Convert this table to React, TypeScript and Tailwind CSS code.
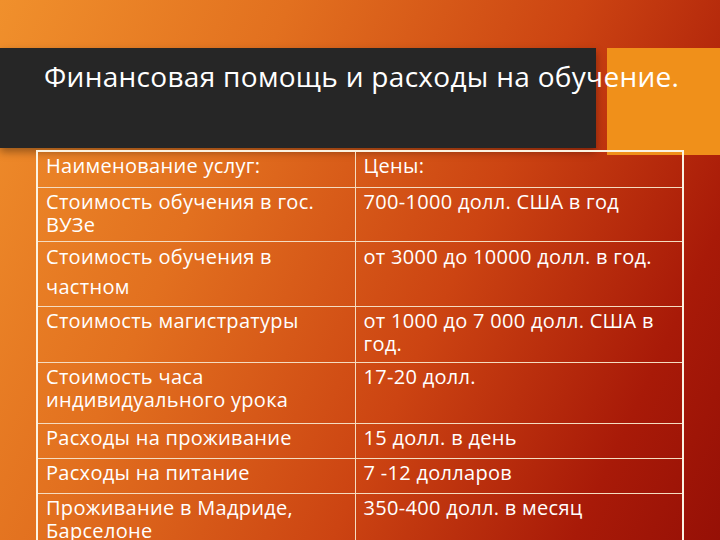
const rows: { name: string; price: string; h: string; wide?: boolean }[] = [
  { name: "Наименование услуг:", price: "Цены:", h: "h-[36px]" },
  { name: "Стоимость обучения в гос. ВУЗе", price: "700-1000 долл. США в год", h: "h-[54px]" },
  { name: "Стоимость обучения в частном", price: "от 3000 до 10000 долл. в год.", h: "h-[65px]", wide: true },
  { name: "Стоимость магистратуры", price: "от 1000 до 7 000 долл. США в год.", h: "h-[56px]" },
  { name: "Стоимость часа индивидуального урока", price: "17-20 долл.", h: "h-[61px]" },
  { name: "Расходы на проживание", price: "15 долл. в день", h: "h-[35px]" },
  { name: "Расходы на питание", price: "7 -12 долларов", h: "h-[35px]" },
  { name: "Проживание в Мадриде, Барселоне", price: "350-400 долл. в месяц", h: "h-[60px]" }
];

export default function App() {
  return (
    <div className="relative h-[540px] w-[720px] overflow-hidden bg-[linear-gradient(115deg,#f0902c_0%,#e2701f_30%,#cc4412_60%,#a81a08_85%,#961006_100%)] font-['Open_Sans','Noto_Sans',sans-serif] text-white">
      <div className="h-[48px]" />
      <div className="flex h-[107px]">
        <div className="h-[100px] w-[596px] bg-[#262626] shadow-[0_4px_8px_rgba(0,0,0,0.35)]" />
        <div className="ml-[11px] h-[107px] flex-1 bg-[#f0901a]" />
      </div>
      <h1 className="absolute left-[44px] top-[58px] whitespace-nowrap text-[28px] leading-[36px] tracking-[0.3px] text-white">
        Финансовая помощь и расходы на обучение.
      </h1>
      <table className="absolute left-[36px] top-[150px] w-[648px] table-fixed border-collapse border-2 border-[#fbf3e2] text-[20px] tracking-[0.3px]">
        <colgroup>
          <col className="w-[318px]" />
          <col />
        </colgroup>
        <tbody>
          {rows.map((r) => (
            <tr key={r.name} className={`${r.h} border-b border-[#f5dcc0]`}>
              <td className={`border-r border-[#f5dcc0] px-[8px] align-top ${r.wide ? "pt-0 leading-[30px]" : "pt-[2px] leading-[23px]"}`}>
                {r.name}
              </td>
              <td className={`px-[8px] align-top ${r.wide ? "pt-0 leading-[30px]" : "pt-[2px] leading-[23px]"}`}>
                {r.price}
              </td>
            </tr>
          ))}
        </tbody>
      </table>
    </div>
  );
}
